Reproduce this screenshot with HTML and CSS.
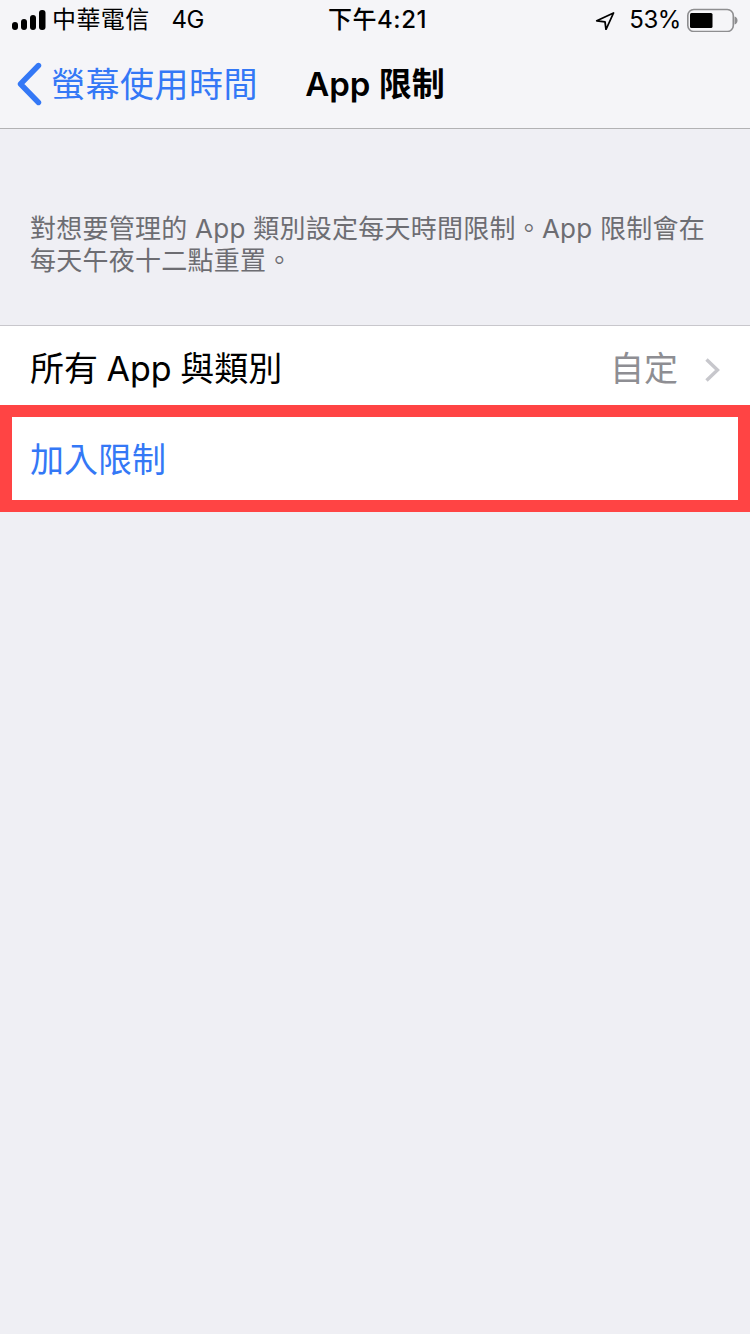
FILE: index.html
```html
<!DOCTYPE html>
<html lang="zh-Hant">
<head>
    <meta charset="UTF-8">
    <meta name="viewport" content="width=device-width, initial-scale=1.0">
    <title>App 限制</title>
    <link rel="stylesheet" href="styles.css">
</head>
<body>
    <header class="top">
        <div class="status">
            <div class="status-left">
                <svg class="signal" width="34" height="20" viewBox="0 0 34 20">
                    <rect x="0" y="12" width="6" height="8" rx="3"/>
                    <rect x="9" y="9" width="6" height="11" rx="3"/>
                    <rect x="18" y="5" width="6" height="15" rx="3"/>
                    <rect x="27" y="0" width="6.5" height="20" rx="3"/>
                </svg>
                <span class="carrier">中華電信</span>
                <span class="net">4G</span>
            </div>
            <div class="status-time">下午4:21</div>
            <div class="status-right">
                <svg class="arrow" width="20" height="20" viewBox="0 0 20 20">
                    <path d="M18.500 3 1.800 10.800 10 11.800 11 19.500Z" fill="none" stroke="#000" stroke-width="1.800" stroke-linejoin="round"/>
                </svg>
                <span class="percent">53%</span>
                <svg class="battery" width="52" height="24" viewBox="0 0 52 24">
                    <rect x="0.800" y="1.500" width="45.500" height="22" rx="6" fill="none" stroke="#8e8e90" stroke-width="1.600"/>
                    <rect x="3" y="5" width="22.500" height="15" rx="1.500" fill="#000"/>
                    <path d="M47.500 8.500c2 .5 3 2 3 4s-1 3.500-3 4z" fill="#8e8e90"/>
                </svg>
            </div>
        </div>
        <nav class="nav">
            <a class="back">
                <svg class="back-icon" width="26" height="44" viewBox="0 0 26 44">
                    <path d="M22.500 3.500 4.500 22 22.500 40.500" fill="none" stroke="#3478f6" stroke-width="5.400" stroke-linecap="round" stroke-linejoin="round"/>
                </svg>
                <span>螢幕使用時間</span>
            </a>
            <h1 class="nav-title">App 限制</h1>
        </nav>
    </header>

    <main>
        <p class="note">對想要管理的 App 類別設定每天時間限制。App 限制會在每天午夜十二點重置。</p>
        <section class="list">
            <div class="row">
                <span class="row-label">所有 App 與類別</span>
                <span class="row-value">自定</span>
                <svg class="chevron" width="16" height="26" viewBox="0 0 16 26">
                    <path d="M2.500 2.500 13.500 13 2.500 23.500" fill="none" stroke="#c7c7cc" stroke-width="3.400"/>
                </svg>
            </div>
            <div class="row row-add">
                <span class="row-link">加入限制</span>
            </div>
        </section>
    </main>
</body>
</html>
```

FILE: styles.css
```css
* {
    box-sizing: border-box;
}

html,
body {
    height: 100%;
}

body {
    margin: 0;
    background: #efeff4;
    color: #000;
    font-family: Inter, "Noto Sans CJK TC", sans-serif;
}

.top {
    background: #f5f5f8;
    border-bottom: 1px solid #b2b2b4;
    height: 129px;
}

.status {
    height: 40px;
    display: grid;
    grid-template-columns: 1fr auto 1fr;
    align-items: center;
    font-size: 24px;
    line-height: 40px;
}

.status-left {
    display: flex;
    align-items: center;
    padding-left: 12px;
}

.signal {
    fill: #000;
    margin-right: 6px;
}

.carrier {
    letter-spacing: .4px;
}

.net {
    margin-left: 22px;
    letter-spacing: -.5px;
}

.status-time {
    font-weight: 500;
    letter-spacing: .5px;
    margin-left: 5px;
}

.status-right {
    display: flex;
    align-items: center;
    justify-content: flex-end;
    padding-right: 11px;
}

.arrow {
    margin-right: 14px;
}

.percent {
    margin-right: 6px;
    letter-spacing: -.4px;
}

.nav {
    height: 88px;
    padding-bottom: 4px;
    display: grid;
    grid-template-columns: 1fr auto 1fr;
    align-items: center;
}

.back {
    display: flex;
    align-items: center;
    color: #3478f6;
    font-size: 34px;
    letter-spacing: .5px;
    padding-left: 16px;
    white-space: nowrap;
}

.back-icon {
    margin-right: 9px;
    margin-top: 4px;
}

.nav-title {
    grid-column: 2;
    margin: 0;
    font-size: 33px;
    font-weight: 600;
}

.note {
    margin: 0;
    padding: 84px 30px 48px;
    height: 196px;
    font-size: 26px;
    line-height: 32px;
    letter-spacing: .25px;
    color: #6d6d72;
}

.list {
    background: #fff;
    border-top: 1px solid #c8c7cc;
}

.row {
    display: flex;
    align-items: center;
    font-size: 34px;
    background: #fff;
}

.row:first-child {
    height: 79px;
    padding: 2px 30px 0;
}

.row-label {
    flex: 1;
    word-spacing: -1px;
}

.row-value {
    color: #8e8e93;
    margin-right: 26px;
}

.chevron {
    margin-top: 6px;
}

.row-add {
    height: 107px;
    border: 12px solid #ff4444;
    padding: 0 0 2px 18px;
}

.row-link {
    color: #3478f6;
}
```
